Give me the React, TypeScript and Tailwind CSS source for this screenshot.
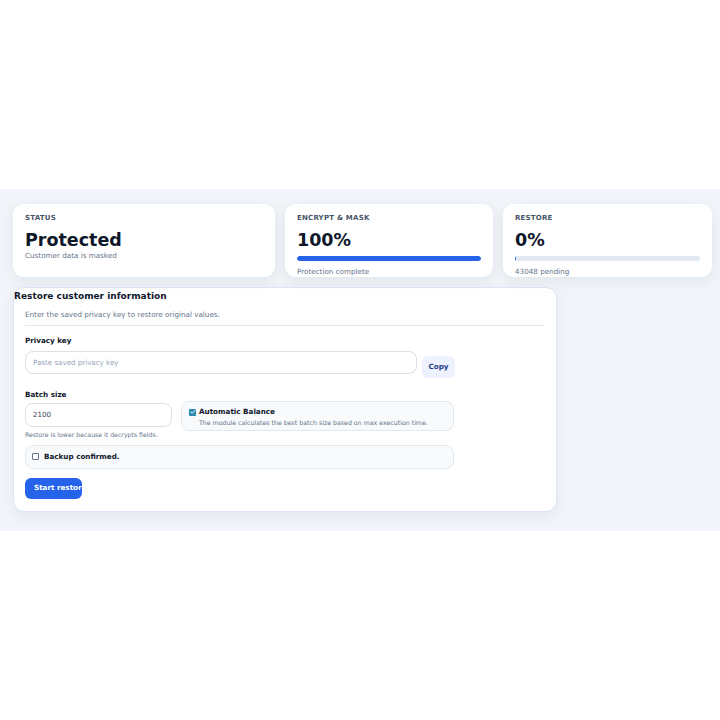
import { Check } from 'lucide-react'

const font = { fontFamily: '"DejaVu Sans", "Liberation Sans", sans-serif' }

function StatCard({ label, value, children }: { label: string; value: string; children: React.ReactNode }) {
  return (
    <div className="h-[73px] overflow-hidden rounded-[11px] bg-white px-[12px] pt-[9px] shadow-[0_4px_14px_rgba(15,23,42,0.07)]">
      <div className="text-[7px] font-bold uppercase leading-[10px] tracking-[0.03em] text-[#475569]">{label}</div>
      <div className="mt-[7px] text-[17.5px] font-bold leading-[20px] text-[#0f172a]">{value}</div>
      {children}
    </div>
  )
}

function Bar({ pct }: { pct: number }) {
  return (
    <div className="mt-[6px] h-[5px] w-full overflow-hidden rounded-full bg-[#e2e8f0]">
      <div className="h-full rounded-full bg-[#2563eb]" style={{ width: pct === 0 ? '1px' : `${pct}%` }} />
    </div>
  )
}

export default function App() {
  return (
    <div style={font} className="flex min-h-[720px] flex-col justify-center bg-white">
      <div className="bg-[#f1f5f9] pb-[19px] pl-[13px] pt-[15px]">
        <div className="grid grid-cols-[262px_208px_209px] gap-[10px]">
          <StatCard label="Status" value="Protected">
            <div className="mt-[1px] text-[7.2px] leading-[10px] text-[#64748b]">Customer data is masked</div>
          </StatCard>
          <StatCard label="Encrypt & Mask" value="100%">
            <Bar pct={100} />
            <div className="mt-[6px] text-[7.2px] leading-[10px] text-[#64748b]">Protection complete</div>
          </StatCard>
          <StatCard label="Restore" value="0%">
            <Bar pct={0} />
            <div className="mt-[6px] text-[7.2px] leading-[10px] text-[#64748b]">43048 pending</div>
          </StatCard>
        </div>

        <div className="mt-[10px] w-[544px] rounded-[11px] border border-[#dbe5f7] bg-white pb-[12px] pt-[2px] shadow-[0_4px_14px_rgba(15,23,42,0.06)]">
          <h2 className="text-[9px] font-bold leading-[12px] text-[#0f172a]">Restore customer information</h2>
          <div className="px-[11px]">
            <p className="mt-[8px] border-b border-[#e2e8f0] pb-[5px] text-[7.2px] leading-[10px] text-[#64748b]">
              Enter the saved privacy key to restore original values.
            </p>

            <div className="mt-[10px] text-[7.2px] font-bold leading-[10px] text-[#0f172a]">Privacy key</div>
            <div className="mt-[5px] flex items-start gap-[5px]">
              <input
                className="h-[23px] w-[392px] rounded-[8px] border border-[#dfdde9] px-[7px] text-[7.1px] text-[#334155] outline-none placeholder:text-[#94a3b8]"
                placeholder="Paste saved privacy key"
              />
              <button className="mt-[5px] h-[22px] w-[33px] rounded-[6px] bg-[#eef2ff] text-[7.2px] font-bold text-[#1e3a8a]">Copy</button>
            </div>

            <div className="mt-[12px] text-[7.2px] font-bold leading-[10px] text-[#0f172a]">Batch size</div>
            <div className="flex w-[429px] items-start gap-[9px]">
              <div className="w-[147px]">
                <input
                  className="h-[24px] w-full rounded-[8px] border border-[#dfdde9] px-[7px] text-[7.1px] text-[#334155] outline-none"
                  defaultValue="2100"
                />
                <div className="mt-[4px] text-[6.2px] leading-[8px] text-[#64748b]">Restore is lower because it decrypts fields.</div>
              </div>
              <div className="mt-[1px] h-[30px] flex-1 rounded-[8px] border border-[#e2e8f0] bg-[#f8fafc] pl-[7px] pt-[5px]">
                <div className="flex items-center gap-[3px]">
                  <span className="flex h-[7px] w-[7px] items-center justify-center rounded-[1px] bg-[#2a8bb0]">
                    <Check size={6} strokeWidth={4} className="text-white" />
                  </span>
                  <span className="text-[7.2px] font-bold leading-[10px] text-[#0f172a]">Automatic Balance</span>
                </div>
                <div className="mt-[1px] pl-[10px] text-[6.25px] leading-[9px] text-[#64748b]">
                  The module calculates the best batch size based on max execution time.
                </div>
              </div>
            </div>

            <div className="mt-[6px] flex h-[24px] w-[429px] items-center gap-[5px] rounded-[8px] border border-[#e2e8f0] bg-[#f8fafc] pl-[6px]">
              <span className="h-[7px] w-[7px] rounded-[1px] border border-[#64748b] bg-white" />
              <span className="text-[7.2px] font-bold leading-[10px] text-[#0f172a]">Backup confirmed.</span>
            </div>

            <button className="mt-[9px] h-[21px] w-[57px] overflow-hidden whitespace-nowrap rounded-[6px] bg-[#2563eb] pl-[9px] text-left text-[7.2px] font-bold text-white">
              Start restore
            </button>
          </div>
        </div>
      </div>
    </div>
  )
}
